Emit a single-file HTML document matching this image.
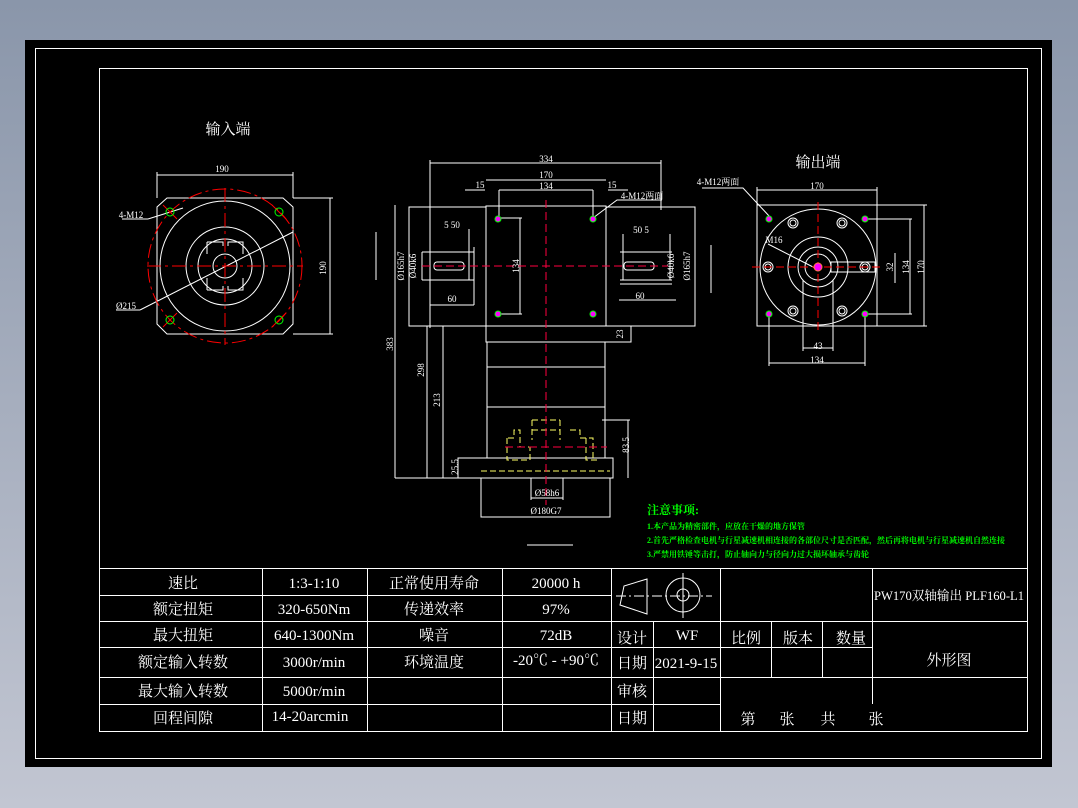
<!DOCTYPE html>
<html><head><meta charset="utf-8"><style>
html,body{margin:0;padding:0;background:#8d98ab;width:1078px;height:808px;overflow:hidden}
svg{display:block}
text{font-family:"Liberation Serif","Noto Serif CJK SC","Noto Sans CJK SC",serif;fill:#fff}
.t{font-size:15px}
.s{font-size:9px}
.g{fill:#00ff00;font-size:8px;font-weight:bold}
</style></head><body>
<svg width="1078" height="808" viewBox="0 0 1078 808">
<defs><linearGradient id="bg" x1="0" y1="0" x2="0" y2="1"><stop offset="0" stop-color="#8a96aa"/><stop offset="1" stop-color="#c2c6d2"/></linearGradient></defs>
<rect x="0" y="0" width="1078" height="808" fill="url(#bg)"/>
<rect x="25" y="40" width="1027" height="727" fill="#000"/>
<rect x="35.5" y="48.5" width="1006" height="710" fill="none" stroke="#fff" stroke-width="1"/>
<g stroke="#fff" fill="none" stroke-width="1">
<rect x="99.5" y="68.5" width="928" height="663"/>
<!-- table -->
<line x1="100" y1="568.5" x2="1027" y2="568.5"/>
<line x1="100" y1="595.5" x2="611" y2="595.5"/>
<line x1="100" y1="621.5" x2="1027" y2="621.5"/>
<line x1="100" y1="647.5" x2="872" y2="647.5"/>
<line x1="100" y1="677.5" x2="1027" y2="677.5"/>
<line x1="100" y1="704.5" x2="720" y2="704.5"/>
<line x1="262.5" y1="568" x2="262.5" y2="731"/>
<line x1="367.5" y1="568" x2="367.5" y2="731"/>
<line x1="502.5" y1="568" x2="502.5" y2="731"/>
<line x1="611.5" y1="568" x2="611.5" y2="731"/>
<line x1="653.5" y1="621" x2="653.5" y2="731"/>
<line x1="720.5" y1="568" x2="720.5" y2="731"/>
<line x1="771.5" y1="621" x2="771.5" y2="677"/>
<line x1="822.5" y1="621" x2="822.5" y2="677"/>
<line x1="872.5" y1="568" x2="872.5" y2="704"/>
<!-- icon -->
<path d="M647 579 L624 586 L620 605 L647 614 Z"/>
<circle cx="683" cy="595" r="17"/><circle cx="683" cy="595" r="6"/>
<line x1="616" y1="596" x2="712" y2="596" stroke-dasharray="10 3 2 3"/>
<line x1="683" y1="573" x2="683" y2="618"/>
</g>
<g class="t" text-anchor="middle">
<text x="183" y="588">速比</text><text x="183" y="614">额定扭矩</text><text x="183" y="640">最大扭矩</text><text x="183" y="667">额定输入转数</text><text x="183" y="696">最大输入转数</text><text x="183" y="723">回程间隙</text>
<text x="314" y="588">1:3-1:10</text><text x="314" y="614">320-650Nm</text><text x="314" y="640">640-1300Nm</text><text x="314" y="667">3000r/min</text><text x="314" y="696">5000r/min</text><text x="310" y="721">14-20arcmin</text>
<text x="434" y="588">正常使用寿命</text><text x="434" y="614">传递效率</text><text x="434" y="640">噪音</text><text x="434" y="667">环境温度</text>
<text x="556" y="588">20000 h</text><text x="556" y="614">97%</text><text x="556" y="640">72dB</text><text x="556" y="665">-20℃ - +90℃</text>
<text x="632" y="643">设计</text><text x="632" y="668">日期</text><text x="632" y="696">审核</text><text x="632" y="723">日期</text>
<text x="687" y="640">WF</text><text x="686" y="668">2021-9-15</text>
<text x="746" y="643">比例</text><text x="798" y="643">版本</text><text x="851" y="643">数量</text>
<text x="949" y="600" style="font-size:13px" textLength="150" lengthAdjust="spacingAndGlyphs">PW170双轴输出 PLF160-L1</text><text x="949" y="665">外形图</text>
<text x="748" y="724">第</text><text x="787" y="724">张</text><text x="828" y="724">共</text><text x="876" y="724">张</text>
<text x="228" y="134">输入端</text><text x="818" y="167">输出端</text>
</g>
<!-- input view -->
<g fill="none" stroke-width="1">
<g stroke="#fff">
<path d="M167 198 H283 L293 207 V324 L283 334 H167 L157 324 V207 Z"/>
<circle cx="225" cy="266" r="65"/><circle cx="225" cy="266" r="39"/><circle cx="225" cy="266" r="27"/><circle cx="225" cy="266" r="12"/>
<path d="M207 242 H223 V246 M228 246 V242 H243 V254 M207 290 H223 V286 M228 286 V290 H243 V278 M207 242 V254 M207 290 V278"/>
<line x1="157" y1="175" x2="293" y2="175"/><line x1="157" y1="172" x2="157" y2="198"/><line x1="293" y1="172" x2="293" y2="198"/>
<line x1="293" y1="198" x2="333" y2="198"/><line x1="293" y1="334" x2="333" y2="334"/><line x1="330" y1="198" x2="330" y2="334"/>
<line x1="122" y1="219" x2="148" y2="219"/><path d="M148 219 L183 208"/>
<line x1="116" y1="310" x2="140" y2="310"/><path d="M140 310 L293 232"/>
</g>
<g stroke="#ff0000">
<circle cx="225" cy="266" r="77" stroke-dasharray="14 4 3 4"/>
<line x1="147" y1="266" x2="303" y2="266" stroke-dasharray="14 4 3 4"/>
<line x1="225" y1="188" x2="225" y2="345" stroke-dasharray="14 4 3 4"/>
<path d="M163 205 L177 219 M272 205 L286 219 M163 327 L177 313 M272 327 L286 313"/>
</g>
<g stroke="#00ff00"><circle cx="170" cy="212" r="4"/><circle cx="279" cy="212" r="4"/><circle cx="170" cy="320" r="4"/><circle cx="279" cy="320" r="4"/></g>
</g>
<g class="s" text-anchor="middle"><text x="222" y="172">190</text><text x="131" y="218">4-M12</text><text x="126" y="309">Ø215</text><text x="326" y="268" transform="rotate(-90 326 268)">190</text></g>
<!-- side view -->
<g fill="none" stroke="#fff" stroke-width="1">
<rect x="486" y="206" width="120" height="120"/>
<rect x="409" y="207" width="77" height="119"/>
<rect x="606" y="207" width="89" height="119"/>
<path d="M422 252 H474 M422 280 H474 M430 229 V280 M469 229 V280 M422 252 V280 M430 305 H474 M474 247 V305"/>
<path d="M620 252 H672 M620 280 H672 M623 234 V280 M670 234 V280 M620 284 H672 M619 300 H676"/>
<rect x="434" y="262" width="30" height="8" rx="3"/><rect x="624" y="262" width="30" height="8" rx="3"/>
<rect x="486" y="326" width="145" height="16"/>
<rect x="487" y="342" width="118" height="116"/>
<line x1="487" y1="367" x2="605" y2="367"/><line x1="487" y1="407" x2="605" y2="407"/>
<rect x="458" y="458" width="155" height="20"/>
<rect x="481" y="478" width="129" height="39"/>
<line x1="430" y1="163" x2="661" y2="163"/><line x1="430" y1="160" x2="430" y2="328"/><line x1="661" y1="160" x2="661" y2="210"/>
<line x1="486" y1="180" x2="606" y2="180"/><line x1="499" y1="190" x2="593" y2="190"/><line x1="499" y1="190" x2="499" y2="218"/><line x1="593" y1="190" x2="593" y2="218"/>
<line x1="465" y1="190" x2="485" y2="190"/><line x1="608" y1="190" x2="628" y2="190"/>
<path d="M593 218 L617 200 H662"/>
<line x1="395" y1="205" x2="395" y2="478"/><line x1="395" y1="478" x2="460" y2="478"/>
<line x1="427" y1="326" x2="427" y2="478"/><line x1="443" y1="326" x2="443" y2="478"/>
<line x1="500" y1="218" x2="522" y2="218"/><line x1="500" y1="314" x2="522" y2="314"/><line x1="520" y1="218" x2="520" y2="314"/>
<line x1="602" y1="420" x2="630" y2="420"/><line x1="628" y1="420" x2="628" y2="478"/>
<line x1="531" y1="478" x2="531" y2="500"/><line x1="563" y1="478" x2="563" y2="500"/><line x1="531" y1="498" x2="563" y2="498"/>
<line x1="481" y1="517" x2="610" y2="517"/>
<line x1="376" y1="232" x2="376" y2="280"/><line x1="527" y1="545" x2="573" y2="545"/>
</g>
<g fill="none" stroke="#ffff66" stroke-dasharray="6 3">
<path d="M532 420 H560 M532 430 H560 M532 420 V440 M560 420 V440 M507 438 V460 H530 V447 H520 V430 H514 V438 Z M586 438 V460 H600 M570 430 H580 V438 H593 V460"/>
<line x1="481" y1="471" x2="610" y2="471"/>
</g>
<g stroke="#ff0040" fill="none" stroke-dasharray="8 4">
<line x1="546" y1="200" x2="546" y2="505"/><line x1="422" y1="266" x2="668" y2="266"/><line x1="505" y1="447" x2="607" y2="447"/>
</g>
<g><circle cx="498" cy="219" r="3" fill="#ff00ff" stroke="#00ff00"/><circle cx="593" cy="219" r="3" fill="#ff00ff" stroke="#00ff00"/><circle cx="498" cy="314" r="3" fill="#ff00ff" stroke="#00ff00"/><circle cx="593" cy="314" r="3" fill="#ff00ff" stroke="#00ff00"/></g>
<g class="s" text-anchor="middle">
<text x="546" y="162">334</text><text x="546" y="178">170</text><text x="546" y="189">134</text><text x="480" y="188">15</text><text x="612" y="188">15</text><text x="642" y="199">4-M12两面</text>
<text x="452" y="228">5 50</text><text x="641" y="233">50 5</text><text x="452" y="302">60</text><text x="640" y="299">60</text>
<text x="404" y="266" transform="rotate(-90 404 266)">Ø165h7</text><text x="416" y="266" transform="rotate(-90 416 266)">Ø40k6</text>
<text x="674" y="266" transform="rotate(-90 674 266)">Ø40k6</text><text x="690" y="266" transform="rotate(-90 690 266)">Ø165h7</text>
<text x="519" y="266" transform="rotate(-90 519 266)">134</text><text x="623" y="334" transform="rotate(-90 623 334)">23</text>
<text x="393" y="344" transform="rotate(-90 393 344)">383</text><text x="424" y="370" transform="rotate(-90 424 370)">298</text><text x="440" y="400" transform="rotate(-90 440 400)">213</text>
<text x="629" y="445" transform="rotate(-90 629 445)">83.5</text><text x="458" y="467" transform="rotate(-90 458 467)">25.5</text>
<text x="547" y="496">Ø58h6</text><text x="546" y="514">Ø180G7</text>
</g>
<!-- output view -->
<g fill="none" stroke="#fff">
<rect x="757" y="205" width="120" height="121"/>
<circle cx="818" cy="267" r="58"/><circle cx="818" cy="267" r="30"/><circle cx="818" cy="267" r="20"/><circle cx="818" cy="267" r="13"/>
<circle cx="793" cy="223" r="5"/><circle cx="793" cy="223" r="3"/><circle cx="842" cy="223" r="5"/><circle cx="842" cy="223" r="3"/>
<circle cx="768" cy="267" r="5"/><circle cx="768" cy="267" r="3"/><circle cx="865" cy="267" r="5"/><circle cx="865" cy="267" r="3"/>
<circle cx="793" cy="311" r="5"/><circle cx="793" cy="311" r="3"/><circle cx="842" cy="311" r="5"/><circle cx="842" cy="311" r="3"/>
<rect x="831" y="262" width="44" height="10"/>
<line x1="757" y1="190" x2="877" y2="190"/><line x1="757" y1="187" x2="757" y2="205"/><line x1="877" y1="187" x2="877" y2="205"/>
<line x1="877" y1="205" x2="927" y2="205"/><line x1="877" y1="326" x2="927" y2="326"/><line x1="924" y1="205" x2="924" y2="326"/>
<line x1="865" y1="219" x2="912" y2="219"/><line x1="865" y1="314" x2="912" y2="314"/><line x1="910" y1="219" x2="910" y2="314"/>
<line x1="895" y1="253" x2="895" y2="283"/>
<line x1="769" y1="314" x2="769" y2="366"/><line x1="865" y1="314" x2="865" y2="366"/><line x1="769" y1="363" x2="865" y2="363"/>
<line x1="803" y1="280" x2="803" y2="351"/><line x1="833" y1="280" x2="833" y2="351"/><line x1="803" y1="348" x2="833" y2="348"/>
<path d="M702 188 H743 L770 217"/><path d="M768 244 L815 268"/>
<line x1="711" y1="245" x2="711" y2="293"/>
</g>
<g stroke="#ff0000" stroke-dasharray="8 4"><line x1="752" y1="267" x2="884" y2="267"/><line x1="818" y1="202" x2="818" y2="333"/></g>
<g><circle cx="769" cy="219" r="3" fill="#ff00ff" stroke="#00ff00"/><circle cx="865" cy="219" r="3" fill="#ff00ff" stroke="#00ff00"/><circle cx="769" cy="314" r="3" fill="#ff00ff" stroke="#00ff00"/><circle cx="865" cy="314" r="3" fill="#ff00ff" stroke="#00ff00"/><circle cx="818" cy="267" r="4" fill="#ff00ff" stroke="#ff8040"/></g>
<g class="s" text-anchor="middle"><text x="817" y="189">170</text><text x="718" y="185">4-M12两面</text><text x="774" y="243">M16</text><text x="818" y="349">43</text><text x="817" y="363">134</text>
<text x="893" y="267" transform="rotate(-90 893 267)">32</text><text x="909" y="267" transform="rotate(-90 909 267)">134</text><text x="924" y="267" transform="rotate(-90 924 267)">170</text></g>
<!-- notes -->
<text x="647" y="514" style="fill:#00ff00;font-size:12px;font-weight:bold">注意事项:</text>
<text class="g" x="647" y="529">1.本产品为精密部件，应放在干燥的地方保管</text>
<text class="g" x="647" y="543">2.首先严格检查电机与行星减速机相连接的各部位尺寸是否匹配，然后再将电机与行星减速机自然连接</text>
<text class="g" x="647" y="557">3.严禁用铁锤等击打，防止轴向力与径向力过大损坏轴承与齿轮</text>
</svg>
</body></html>
